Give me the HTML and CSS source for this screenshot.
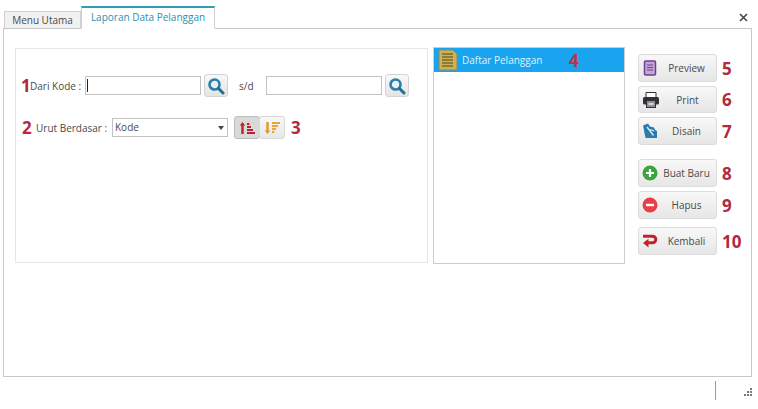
FILE: index.html
```html
<!DOCTYPE html>
<html lang="id">
<head>
<meta charset="utf-8">
<title>Laporan Data Pelanggan</title>
<link rel="stylesheet" href="styles.css">
</head>
<body>
<div class="tabbar">
  <div class="tab">Menu Utama</div>
  <div class="tab active">Laporan Data Pelanggan</div>
  <svg class="close" viewBox="0 0 9 9" width="9" height="9"><path d="M1 1l7 7M8 1l-7 7" stroke="#444" stroke-width="1.6"/></svg>
</div>
<main class="content">
  <section class="filters">
    <div class="row row-kode">
      <span class="num n1">1</span>
      <label class="lbl">Dari Kode :</label>
      <span class="input first"><i class="caret"></i></span>
      <button class="search"><svg viewBox="0 0 18 18" width="18" height="18"><circle cx="7.5" cy="7.5" r="5" fill="#e8f1f6" stroke="#2b7fa8" stroke-width="2.6"/><path d="M11.5 11.5l4.5 4.5" stroke="#1f6e96" stroke-width="3" stroke-linecap="round"/></svg></button>
      <span class="sd">s/d</span>
      <span class="input"></span>
      <button class="search"><svg viewBox="0 0 18 18" width="18" height="18"><circle cx="7.5" cy="7.5" r="5" fill="#e8f1f6" stroke="#2b7fa8" stroke-width="2.6"/><path d="M11.5 11.5l4.5 4.5" stroke="#1f6e96" stroke-width="3" stroke-linecap="round"/></svg></button>
    </div>
    <div class="row row-urut">
      <span class="num n2">2</span>
      <label class="lbl">Urut Berdasar :</label>
      <span class="select">Kode<i class="arrow"></i></span>
      <span class="sort">
        <button class="sortbtn on"><svg viewBox="0 0 16 14" width="16" height="14"><path d="M3.5 1L6.2 4.5H4.7V13H2.3V4.5H.8z" fill="#b3262f"/><path d="M8 2h2.4v2H8zM8 5h4v2H8zM8 8h6v2H8zM8 11h8v2H8z" fill="#b3262f"/></svg></button>
        <button class="sortbtn"><svg viewBox="0 0 16 14" width="16" height="14"><path d="M3.5 13L6.2 9.500H4.700V1H2.300V9.500H.8z" fill="#dd9a26"/><path d="M8 1h8v2H8zM8 4h6v2H8zM8 7h4v2H8zM8 10h2.400v2H8z" fill="#e9a92e"/></svg></button>
      </span>
      <span class="num n3">3</span>
    </div>
  </section>
  <section class="list">
    <div class="item">
      <svg viewBox="0 0 20 22" width="20" height="22"><path d="M1 1h14l4 4v16H1z" fill="#c9b25e" stroke="#8f8a55"/><path d="M4 5h11M4 8h11M4 11h11M4 14h11M4 17h11" stroke="#7d6a26" stroke-width="1.400"/></svg>
      <span class="item-text">Daftar Pelanggan</span>
      <span class="num n4">4</span>
    </div>
  </section>
  <section class="actions">
    <div class="action"><button class="btn"><svg viewBox="0 0 16 16" width="16" height="16"><rect x="2.500" y="1" width="11" height="14" rx="1" fill="#c3a6d6" stroke="#6f3f93" stroke-width="1.500"/><path d="M5 5h6M5 7.500h6M5 10h6" stroke="#6f3f93"/></svg><span>Preview</span></button><span class="num">5</span></div>
    <div class="action"><button class="btn short"><svg viewBox="0 0 18 16" width="18" height="16"><path d="M4 .5h10V6H4z" fill="#fff" stroke="#2f3136"/><rect x="1" y="5" width="16" height="7.500" rx="1.500" fill="#2f3136"/><rect x="4.500" y="8.500" width="9" height="7" fill="#8d9196" stroke="#2f3136"/><path d="M6.500 11h5v2h-5z" fill="#d5d7d9"/></svg><span>Print</span></button><span class="num">6</span></div>
    <div class="action"><button class="btn"><svg viewBox="0 0 16 16" width="16" height="16"><path d="M1 2.500L6 .5l2 3 4 1 1 2.500 2 1V15H3.500z" fill="#2a7cae"/><path d="M5 4l6.500 8.500M8 6.500l4 1.500" stroke="#dcebf4" stroke-width="1.300"/></svg><span>Disain</span></button><span class="num">7</span></div>
    <div class="action gap-a"><button class="btn"><svg viewBox="0 0 16 16" width="16" height="16"><circle cx="8" cy="8" r="7.500" fill="#3aa63a"/><path d="M8 4v8M4 8h8" stroke="#fff" stroke-width="2.200"/></svg><span>Buat Baru</span></button><span class="num">8</span></div>
    <div class="action"><button class="btn"><svg viewBox="0 0 16 16" width="16" height="16"><circle cx="8" cy="8" r="7.500" fill="#e8404a"/><path d="M4 8h8" stroke="#fff" stroke-width="2.400"/></svg><span>Hapus</span></button><span class="num">9</span></div>
    <div class="action gap-b"><button class="btn"><svg viewBox="0 0 16 14" width="16" height="14"><path d="M1 2.200h9.500a3.300 3.300 0 0 1 0 6.600H5" fill="none" stroke="#c2232b" stroke-width="3"/><path d="M6.500 4.800v8.700L1 9z" fill="#c2232b"/></svg><span>Kembali</span></button><span class="num">10</span></div>
  </section>
</main>
<footer class="status">
  <i class="sep"></i>
  <svg class="grip" viewBox="0 0 10 9" width="10" height="9"><path d="M8 0h2v2H8zM5 3h2v2H5zM8 3h2v2H8zM2 6h2v2H2zM5 6h2v2H5zM8 6h2v2H8z" fill="#777"/></svg>
</footer>
</body>
</html>
```
FILE: styles.css
```css
* { box-sizing: border-box; }
html, body { margin: 0; height: 100%; }
body {
  width: 758px;
  height: 409px;
  overflow: hidden;
  background: #fff;
  color: #4a4a4a;
  font: 10px "Open Sans", "Noto Sans", sans-serif;
  display: flex;
  flex-direction: column;
}
button { font: inherit; color: inherit; padding: 0; margin: 0; }

.tabbar {
  height: 28px;
  padding: 6px 0 0 4px;
  display: flex;
  align-items: flex-end;
  flex: none;
}
.tab {
  width: 77px;
  height: 18px;
  margin-bottom: -1px;
  background: #f1f1f1;
  border: 1px solid #d2d2d2;
  border-bottom-color: #cfcfcf;
  text-align: center;
  line-height: 16px;
}
.tab.active {
  width: 134px;
  height: 23px;
  background: #fff;
  color: #2d8fb0;
  border-left-color: #cfcfcf;
  border-right-color: #cfcfcf;
  border-top: 2px solid #2c9db3;
  border-bottom-color: #fff;
  line-height: 18px;
  position: relative;
  z-index: 1;
}
.close { margin: 0 10px 6px auto; align-self: flex-end; }

.content {
  width: 749px;
  height: 349px;
  margin-left: 3px;
  border: 1px solid #c8c8c8;
  padding: 19px 0 0 11px;
  display: flex;
  align-items: flex-start;
  flex: none;
}
.filters {
  width: 413px;
  height: 215px;
  border: 1px solid #e6e6e6;
  padding: 25px 0 0 5px;
  flex: none;
}
.row { display: flex; align-items: center; }
.row-kode { height: 23px; }
.row-urut { height: 23px; margin-top: 19px; }

.num {
  font: bold 17px "Open Sans", sans-serif;
  color: #b22a3c;
  line-height: 1;
}
.lbl { white-space: nowrap; }
.n1 { width: 9px; }
.n2 { width: 10px; margin-left: 1px; }
.row-kode .lbl { width: 55px; }
.row-urut .lbl { width: 76px; margin-left: 4px; }

.input {
  width: 116px;
  height: 19px;
  border: 1px solid #c2c2c2;
  background: #fff;
  display: flex;
  align-items: center;
  padding-left: 1px;
}
.caret { width: 1px; height: 13px; background: #222; }
.search {
  width: 24px;
  height: 23px;
  margin-left: 3px;
  border: 1px solid #d4d4d4;
  border-radius: 3px;
  background: linear-gradient(#f8f8f8, #e4e4e4);
  display: flex;
  align-items: center;
  justify-content: center;
}
.sd { width: 38px; padding-left: 11px; }

.select {
  width: 116px;
  height: 19px;
  border: 1px solid #c2c2c2;
  padding-left: 2px;
  line-height: 17px;
  display: flex;
  justify-content: space-between;
  align-items: center;
}
.arrow {
  width: 0;
  height: 0;
  margin-right: 3px;
  border: 3px solid transparent;
  border-top: 4px solid #444;
  border-bottom: 0;
}
.sort { display: flex; margin-left: 6px; }
.sortbtn {
  width: 26px;
  height: 23px;
  border: 1px solid #d8d8d8;
  border-radius: 3px;
  background: linear-gradient(#f7f7f7, #e8e8e8);
  display: flex;
  align-items: center;
  justify-content: center;
}
.sortbtn.on { background: #dcd8d8; border-color: #bdbdbd; }
.sortbtn + .sortbtn { margin-left: -1px; }
.n3 { margin-left: 6px; }

.list {
  width: 192px;
  height: 217px;
  margin: -1px 0 0 5px;
  border: 1px solid #cdcdcd;
  padding: 0;
  flex: none;
}
.item {
  height: 24px;
  background: #1aa3ee;
  color: #dff3ff;
  display: flex;
  align-items: center;
  padding-left: 4px;
}
.item-text { width: 107px; margin-left: 4px; }
.n4 { color: #c03048; }

.actions {
  margin: 6px 0 0 13px;
  display: flex;
  flex-direction: column;
  gap: 4px;
  flex: none;
}
.action { display: flex; align-items: center; gap: 5px; }
.gap-a { margin-top: 10px; }
.gap-b { margin-top: 4px; }
.btn {
  width: 79px;
  height: 28px;
  border: 1px solid #dcdcdc;
  border-radius: 3px;
  background: linear-gradient(#f8f8f8, #e6e6e6);
  display: flex;
  align-items: center;
  padding-left: 3px;
}
.btn.short { height: 27px; }
.btn span { flex: 1; text-align: center; padding-right: 1px; }

.status {
  flex: 1;
  display: flex;
  align-items: flex-start;
  justify-content: flex-end;
  padding: 4px 6px 0 0;
}
.sep { width: 1px; height: 19px; background: #9a9a9a; margin-right: 26px; }
.grip { margin-top: 7px; }
```
